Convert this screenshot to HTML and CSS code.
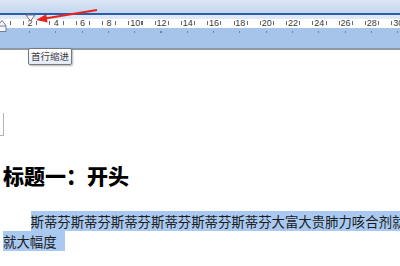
FILE: index.html
```html
<!DOCTYPE html>
<html lang="zh">
<head>
<meta charset="utf-8">
<link rel="stylesheet" href="styles.css">
</head>
<body>
<div class="ruler">
  <div class="ruler-top"></div>
  <div class="ruler-line"></div>
  <div class="ruler-light"></div>
  <div class="ruler-band">
    <div class="nums">
      <span class="n">2</span><span class="n">4</span><span class="n">6</span><span class="n">8</span><span class="n">10</span><span class="n">12</span><span class="n">14</span><span class="n">16</span><span class="n">18</span><span class="n">20</span><span class="n">22</span><span class="n">24</span><span class="n">26</span><span class="n">28</span><span class="n">30</span>
    </div>
  </div>
  <div class="ruler-lower"></div>
  <div class="ruler-edge"></div>

  <svg class="hang-marker" width="10" height="14" viewBox="0 0 10 14">
    <path d="M1 6.5 L5 1.5 L9 6.5 L9 12.5 L1 12.5 Z" fill="#f4f7fb" stroke="#6f7d90" stroke-width="1"/>
    <line x1="1" y1="7" x2="9" y2="7" stroke="#6f7d90" stroke-width="1"/>
  </svg>
  <svg class="first-marker" width="11" height="8" viewBox="0 0 11 8">
    <path d="M1 1 L10 1 L5.5 7 Z" fill="#f7f9fc" stroke="#6d7580" stroke-width="1"/>
  </svg>
  <svg class="arrow" width="100" height="30" viewBox="0 0 100 30">
    <line x1="97" y1="10" x2="45" y2="18.6" stroke="#e8231d" stroke-width="2"/>
    <path d="M36 20 L46.2 14.2 L47.6 22.4 Z" fill="#e8231d"/>
  </svg>
  <div class="tooltip">首行缩进</div>
</div>

<div class="page">
  <div class="corner"></div>
  <h1 class="heading">标题一：开头</h1>
  <p class="para"><span class="sel">斯蒂芬斯蒂芬斯蒂芬斯蒂芬斯蒂芬斯蒂芬大富大贵肺力咳合剂就就大幅度</span></p>
</div>
</body>
</html>
```

FILE: styles.css
```css
html, body {
  margin: 0;
  padding: 0;
  width: 400px;
  height: 266px;
  overflow: hidden;
  background: #ffffff;
}

body {
  font-family: "Noto Sans CJK SC", "Noto Sans", sans-serif;
  color: #1a1a1a;
}

.ruler {
  position: relative;
  display: flex;
  flex-direction: column;
}

.ruler-top {
  height: 13px;
  background: linear-gradient(#dbe6f5, #c4d6ef);
}

.ruler-line {
  height: 2px;
  background: #2c5daa;
}

.ruler-light {
  height: 4px;
  background: #dfe8f5;
}

.ruler-band {
  height: 9px;
  background: #ffffff repeating-linear-gradient(90deg, #6a6a6a 0 1px, transparent 1px 13.15px) 10px 2px / 100% 4px no-repeat;
  overflow: hidden;
}

.nums {
  display: flex;
  padding-left: 16.85px;
}

.n {
  flex: 0 0 26.3px;
  text-align: center;
  font-family: "Liberation Sans", Arial, sans-serif;
  font-size: 9px;
  line-height: 9px;
  color: #3a3a3a;
}

.ruler-lower {
  height: 20px;
  background: #a6c3ea repeating-linear-gradient(90deg, #6f84a3 0 1px, transparent 1px 26.3px) 29px 3px / 100% 2px no-repeat;
}

.ruler-edge {
  height: 2px;
  background: #8f98a6;
}

.hang-marker {
  position: absolute;
  left: -3px;
  top: 19px;
}

.first-marker {
  position: absolute;
  left: 25px;
  top: 14px;
}

.arrow {
  position: absolute;
  left: 0;
  top: 0;
}

.tooltip {
  position: absolute;
  left: 28px;
  top: 48px;
  padding: 0 2px;
  border: 1px solid #76797e;
  border-radius: 2px;
  background: linear-gradient(#ffffff, #e4ebf6);
  box-shadow: 1px 1px 2px rgba(0, 0, 0, 0.3);
  font-size: 9.5px;
  line-height: 15px;
  color: #3f3f3f;
  white-space: nowrap;
}

.page {
  display: flex;
  flex-direction: column;
  align-items: flex-start;
}

.corner {
  margin-top: 63px;
  width: 3px;
  height: 22px;
  border-right: 1px solid #b4b4b4;
  border-bottom: 1px solid #b4b4b4;
}

.heading {
  margin: 29px 0 0 3px;
  font-size: 21px;
  line-height: 21px;
  font-weight: 900;
  color: #000000;
}

.para {
  margin: 25px 0 0 0;
  padding-left: 3px;
  width: 404px;
  flex: 0 0 auto;
  font-size: 13.4px;
  line-height: 20px;
  text-indent: 27.5px;
  color: #1c1c1c;
}

.sel {
  background: #a9c9f0;
  padding-right: 8px;
}
```
